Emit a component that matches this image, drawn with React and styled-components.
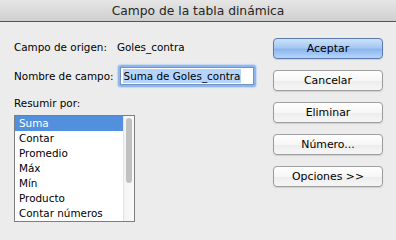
import React from "react";
import styled, { createGlobalStyle } from "styled-components";

const Global = createGlobalStyle`
  html, body { margin: 0; padding: 0; }
  body {
    width: 396px; height: 240px; overflow: hidden;
    background: #ececec;
    font-family: "DejaVu Sans", "Liberation Sans", sans-serif;
    font-size: 10.4px;
    color: #000;
  }
`;

const Window = styled.div`
  width: 396px;
  height: 240px;
  background: #ececec;
  display: flex;
  flex-direction: column;
`;

const TitleBar = styled.div`
  height: 20px;
  border-bottom: 1px solid #555;
  background: linear-gradient(#e6e6e6, #cfcfcf);
  display: flex;
  align-items: center;
  justify-content: center;
  font-size: 12.3px;
  color: #262626;
  padding-top: 1px;
`;

const Body = styled.div`
  display: flex;
  flex: 1;
`;

const Left = styled.div`
  width: 259px;
  padding-left: 14px;
  box-sizing: border-box;
  display: flex;
  flex-direction: column;
`;

const Row = styled.div`
  display: flex;
  align-items: center;
  height: ${(p) => p.h}px;
  margin-top: ${(p) => p.mt}px;
`;

const Label = styled.span`
  margin-right: ${(p) => p.gap || 0}px;
  white-space: nowrap;
`;

const FieldRing = styled.div`
  padding: 2px;
  border-radius: 3px;
  background: #8fb6ec;
  box-shadow: 0 0 1px 1px #c4d9f4;
  margin-left: 4px;
`;

const Field = styled.div`
  width: 130px;
  height: 16px;
  background: #fff;
  border: 1px solid #7392c2;
  display: flex;
  align-items: center;
  padding-left: 2px;
  overflow: hidden;
`;

const Selected = styled.span`
  background: #b4d4fc;
  white-space: nowrap;
  padding: 1px 1px;
`;

const List = styled.div`
  width: 119px;
  height: 105px;
  border: 1px solid #7d7d7d;
  background: #fff;
  display: flex;
  overflow: hidden;
`;

const Items = styled.div`
  flex: 1;
  display: flex;
  flex-direction: column;
`;

const Item = styled.div`
  height: 15px;
  line-height: 15px;
  padding-left: 4px;
  white-space: nowrap;
  background: ${(p) => (p.sel ? "#528fdc" : "transparent")};
  color: ${(p) => (p.sel ? "#fff" : "#000")};
`;

const Track = styled.div`
  width: 11px;
  border-left: 1px solid #e3e3e3;
  background: linear-gradient(90deg, #f3f3f3, #fafafa);
  display: flex;
  justify-content: center;
  padding-top: 2px;
  box-sizing: border-box;
`;

const Thumb = styled.div`
  width: 6px;
  height: 65px;
  border-radius: 3px;
  background: #c1c1c1;
`;

const Right = styled.div`
  display: flex;
  flex-direction: column;
  gap: 11px;
  padding-top: 16px;
  margin-left: 14px;
`;

const Button = styled.div`
  width: 110px;
  height: 21px;
  box-sizing: border-box;
  border-radius: 4px;
  display: flex;
  align-items: center;
  justify-content: center;
  font-size: 10.9px;
  color: #000;
  border: 1px solid ${(p) => (p.primary ? "#5a79b0" : "#9d9d9d")};
  background: ${(p) =>
    p.primary
      ? "linear-gradient(#cde2fa 0%, #a6c8f2 45%, #8bb6ee 55%, #b6d6fb 100%)"
      : "linear-gradient(#ffffff 0%, #f6f6f6 50%, #ececec 52%, #f7f7f7 100%)"};
  box-shadow: 0 1px 1px rgba(0,0,0,0.12);
`;

const items = ["Suma", "Contar", "Promedio", "Máx", "Mín", "Producto", "Contar números"];

export default function App() {
  return (
    <>
      <Global />
      <Window>
        <TitleBar>Campo de la tabla dinámica</TitleBar>
        <Body>
          <Left>
            <Row h={16} mt={17}>
              <Label gap={10}>Campo de origen:</Label>
              <Label>Goles_contra</Label>
            </Row>
            <Row h={22} mt={10}>
              <Label>Nombre de campo:</Label>
              <FieldRing>
                <Field>
                  <Selected>Suma de Goles_contra</Selected>
                </Field>
              </FieldRing>
            </Row>
            <Row h={16} mt={8}>
              <Label>Resumir por:</Label>
            </Row>
            <Row h={107} mt={4}>
              <List>
                <Items>
                  {items.map((t, i) => (
                    <Item key={t} sel={i === 0}>{t}</Item>
                  ))}
                </Items>
                <Track>
                  <Thumb />
                </Track>
              </List>
            </Row>
          </Left>
          <Right>
            <Button primary>Aceptar</Button>
            <Button>Cancelar</Button>
            <Button>Eliminar</Button>
            <Button>Número...</Button>
            <Button>Opciones &gt;&gt;</Button>
          </Right>
        </Body>
      </Window>
    </>
  );
}
